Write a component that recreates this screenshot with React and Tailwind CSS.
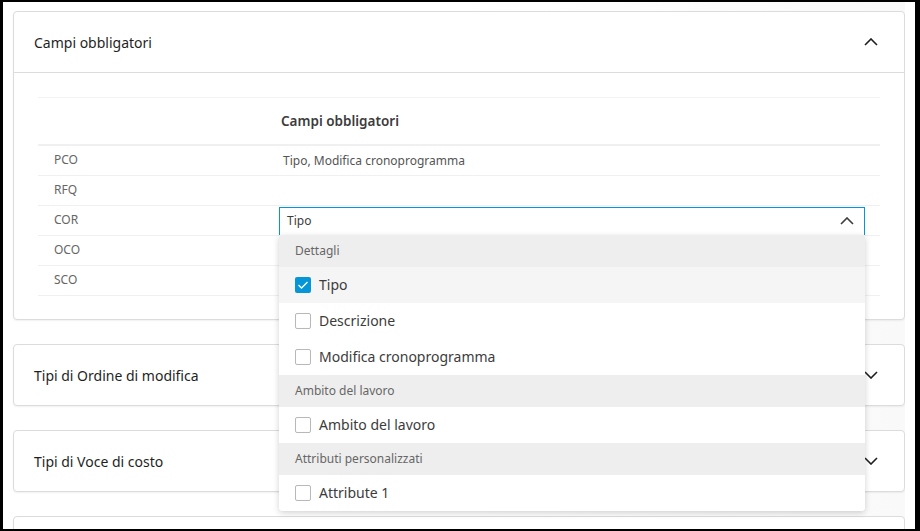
import React from "react";

const font = { fontFamily: '"Noto Sans", "Open Sans", sans-serif' };

function Chevron({ up = false, className = "" }) {
  return (
    <svg width="14" height="8" viewBox="0 0 14 8" className={className}>
      <polyline
        points={up ? "1,7 7,1 13,7" : "1,1 7,7 13,1"}
        fill="none"
        stroke="currentColor"
        strokeWidth="1.6"
      />
    </svg>
  );
}

function Checkbox({ checked }) {
  if (checked) {
    return (
      <span className="w-[16px] h-[16px] rounded-[2px] bg-[#0696d7] flex items-center justify-center">
        <svg width="12" height="10" viewBox="0 0 12 10">
          <polyline points="1.5,5 4.5,8 10.5,2" fill="none" stroke="white" strokeWidth="1.3" />
        </svg>
      </span>
    );
  }
  return <span className="w-[16px] h-[16px] rounded-[2px] border border-[#b8b8b8] bg-white" />;
}

const menu = [
  { type: "group", label: "Dettagli" },
  { type: "item", label: "Tipo", checked: true, hover: true },
  { type: "item", label: "Descrizione" },
  { type: "item", label: "Modifica cronoprogramma" },
  { type: "group", label: "Ambito del lavoro" },
  { type: "item", label: "Ambito del lavoro" },
  { type: "group", label: "Attributi personalizzati" },
  { type: "item", label: "Attribute 1" },
];

function Dropdown() {
  return (
    <div className="relative h-[28px] mr-[15px]">
      <div className="h-[28px] border border-[#0696d7] border-b-0 bg-white flex items-center justify-between pl-[7px] pr-[10px]">
        <span className="text-[12px] text-[#3c3c3c]">Tipo</span>
        <Chevron up className="text-[#3c3c3c]" />
      </div>
      <div className="absolute left-0 top-full w-[586px] bg-white rounded-b-[4px] shadow-[0_2px_6px_rgba(0,0,0,0.18)] z-10 overflow-hidden">
        {menu.map((m, i) =>
          m.type === "group" ? (
            <div key={i} className="h-[32px] bg-[#eeeeee] flex items-center pl-[16px] text-[12px] text-[#666666]">
              {m.label}
            </div>
          ) : (
            <div
              key={i}
              className={`h-[36px] flex items-center gap-[8px] pl-[16px] text-[14px] text-[#3c3c3c] ${m.hover ? "bg-[#f5f5f5]" : "bg-white"}`}
            >
              <Checkbox checked={m.checked} />
              {m.label}
            </div>
          )
        )}
      </div>
    </div>
  );
}

function CollapsedCard({ title }) {
  return (
    <div className="h-[62px] bg-white border border-[#dcdcdc] rounded-[4px] shadow-[0_1px_2px_rgba(0,0,0,0.06)] flex items-center justify-between pl-[20px] pr-[26px] shrink-0">
      <span className="text-[14px] text-[#1f1f1f]">{title}</span>
      <Chevron className="text-[#1f1f1f]" />
    </div>
  );
}

const rows = ["PCO", "RFQ", "COR", "OCO", "SCO"];

export default function App() {
  return (
    <div
      className="w-[920px] h-[531px] overflow-hidden bg-white border-l-[3px] border-t-2 border-r-[5px] border-b-2 border-black"
      style={font}
    >
      <div className="w-[902px] h-full overflow-hidden pl-[10px] pt-[9px] flex flex-col gap-[24px] bg-gradient-to-r from-white via-white to-[#f9f9f9]">
        <div className="w-[892px] bg-white border border-[#dcdcdc] rounded-[4px] shadow-[0_1px_2px_rgba(0,0,0,0.06)] shrink-0">
          <div className="h-[61px] flex items-center justify-between pl-[20px] pr-[26px] border-b border-[#dcdcdc]">
            <span className="text-[14px] text-[#1f1f1f]">Campi obbligatori</span>
            <Chevron up className="text-[#1f1f1f]" />
          </div>
          <div className="px-[24px] pt-[24px] pb-[23px]">
            <div className="border-t border-[#f2f2f2]">
              <div className="h-[48px] flex items-center border-b-2 border-[#f0f0f0]">
                <div className="w-[241px]" />
                <span className="pl-[2px] text-[13.5px] font-semibold text-[#3c3c3c]">Campi obbligatori</span>
              </div>
              {rows.map((r) => (
                <div key={r} className="h-[30px] flex items-center border-b border-[#f0f0f0]">
                  <div className="w-[241px] pl-[16px] pb-[1px] text-[12px] text-[#666666]">{r}</div>
                  <div className="flex-1 text-[12px] text-[#555555]">
                    {r === "PCO" && <span className="pl-[4px]">Tipo, Modifica cronoprogramma</span>}
                    {r === "COR" && <Dropdown />}
                  </div>
                </div>
              ))}
            </div>
          </div>
        </div>
        <div className="w-[892px] flex flex-col gap-[24px]">
          <CollapsedCard title="Tipi di Ordine di modifica" />
          <CollapsedCard title="Tipi di Voce di costo" />
          <CollapsedCard title="" />
        </div>
      </div>
    </div>
  );
}
